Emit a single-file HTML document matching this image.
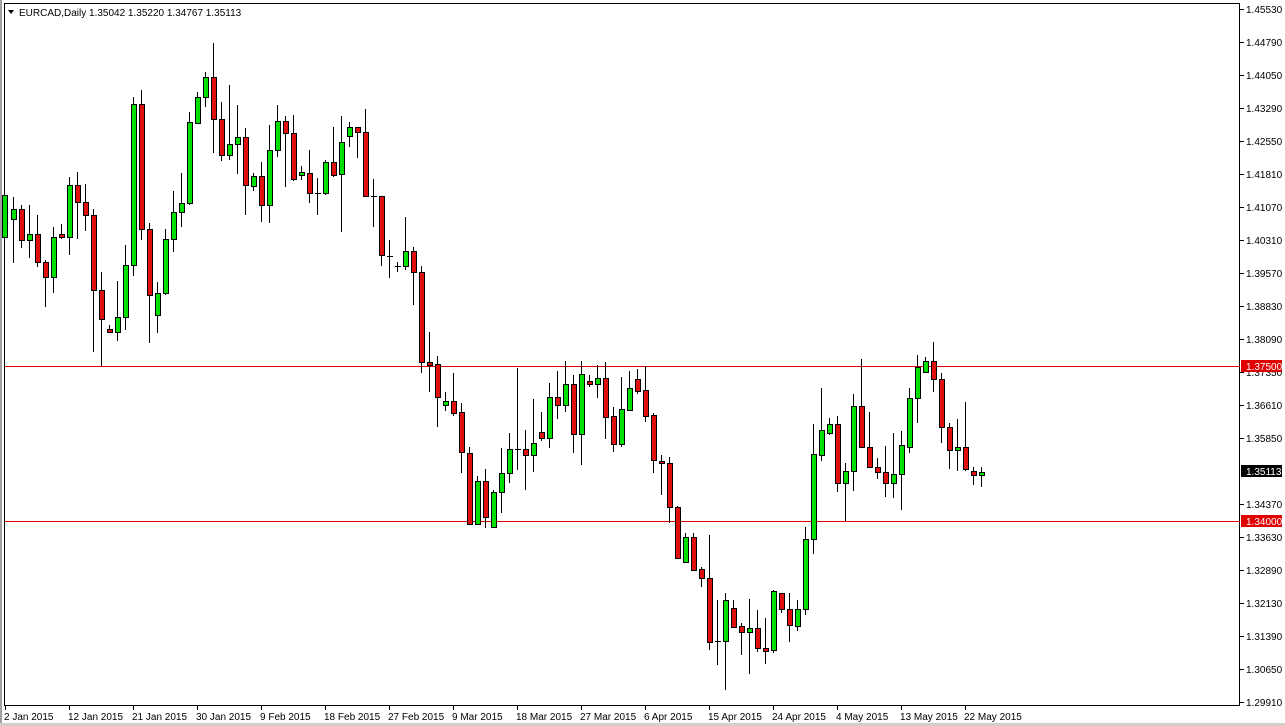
<!DOCTYPE html>
<html><head><meta charset="utf-8"><style>
html,body{margin:0;padding:0;background:#fff;width:1285px;height:726px;overflow:hidden}
svg text{font-family:"Liberation Sans",sans-serif;font-size:10px;fill:#000}
</style></head><body>
<svg id="s" width="1285" height="726" xmlns="http://www.w3.org/2000/svg">
<rect x="0" y="0" width="1285" height="726" fill="#fff"/>
<rect x="0" y="0" width="2" height="726" fill="#a0a0a0"/>
<rect x="0" y="723" width="1285" height="3" fill="#d4d0c8"/>
<rect x="4.5" y="3.5" width="1235" height="702" fill="none" stroke="#000" stroke-width="1"/>
<line x1="5" y1="366.5" x2="1240" y2="366.5" stroke="#e00000"/>
<line x1="5" y1="521.5" x2="1240" y2="521.5" stroke="#e00000"/>
<polygon points="8,10 14,10 11,14" fill="#000"/>
<text x="19" y="16">EURCAD,Daily  1.35042 1.35220 1.34767 1.35113</text>
<g id="c"></g>
<g id="ax"></g>
</svg>
<script>
var d=[[4,237,195,193,247],[13,219,209,197,263],[21,209,240,205,248],[29,240,234,205,258],[37,234,262,215,267],[45,262,277,260,307],[53,277,237,227,293],[61,234,237,224,239],[69,237,185,177,255],[77,185,202,172,239],[85,202,215,184,231],[93,215,290,209,352],[101,290,319,272,366],[109,329,332,325,333],[117,332,317,281,341],[125,317,265,245,330],[133,265,104,97,276],[141,104,229,90,240],[149,229,295,223,343],[157,315,293,282,333],[165,293,239,229,295],[173,239,212,191,252],[181,212,203,173,227],[189,203,122,112,205],[197,123,97,92,124],[205,97,77,72,107],[213,77,119,43,153],[221,119,155,102,161],[229,155,144,85,160],[237,144,137,105,174],[245,137,185,128,215],[253,186,176,173,191],[261,176,205,162,222],[269,205,150,125,223],[277,150,121,105,157],[285,121,133,116,187],[293,133,179,115,181],[301,175,172,166,180],[309,173,193,150,203],[317,193,193,178,215],[325,193,162,160,195],[333,162,175,127,177],[341,174,142,116,232],[349,136,127,122,147],[357,127,132,127,158],[365,132,196,109,197],[373,196,196,179,227],[381,196,255,196,266],[389,256,256,240,278],[397,266,266,262,272],[405,266,251,217,270],[413,251,272,247,305],[421,272,362,266,373],[429,362,365,332,392],[437,364,397,356,427],[445,405,401,392,411],[453,401,413,373,416],[461,412,452,403,473],[469,453,524,447,524],[477,524,481,476,525],[485,481,517,469,528],[493,527,492,490,528],[501,492,473,448,513],[509,473,449,433,483],[517,449,449,368,470],[525,449,455,430,490],[533,455,443,399,472],[541,432,438,412,441],[549,438,397,383,448],[557,397,405,371,419],[565,405,384,361,412],[573,384,434,375,453],[581,434,374,361,465],[589,381,384,375,387],[597,384,378,365,398],[605,378,417,362,439],[613,416,444,407,452],[621,444,409,377,447],[629,410,388,371,411],[637,379,391,369,394],[645,390,416,366,422],[653,415,460,413,473],[661,461,463,455,495],[669,463,507,457,523],[677,507,558,506,558],[685,562,537,533,563],[693,537,570,533,571],[701,569,578,567,587],[709,578,642,535,650],[717,641,641,600,665],[725,641,600,593,690],[733,608,627,600,628],[741,626,632,623,655],[749,632,628,599,674],[757,628,648,610,652],[765,648,651,618,664],[773,650,591,590,653],[781,593,609,593,613],[789,609,625,593,642],[797,626,609,600,631],[805,609,539,527,615],[813,539,454,424,554],[821,455,430,388,461],[829,433,424,418,435],[837,424,483,416,492],[845,483,471,463,521],[853,471,406,394,491],[861,406,447,359,448],[869,447,467,412,467],[877,467,472,458,479],[885,472,483,446,497],[893,483,474,433,498],[901,474,445,431,510],[909,447,398,388,453],[917,398,367,355,423],[925,372,361,357,373],[933,361,379,342,392],[941,379,427,373,443],[949,427,450,423,469],[957,450,447,419,471],[965,447,469,402,471],[973,471,475,467,485],[981,475,472,467,487]];
var h='';
d.forEach(function(c){var x=c[0],o=c[1],cl=c[2],hi=c[3],lo=c[4];
h+='<line x1="'+(x+0.5)+'" y1="'+hi+'" x2="'+(x+0.5)+'" y2="'+lo+'" stroke="#000"/>';
var t=Math.min(o,cl),b=Math.max(o,cl);
if(b-t<1){h+='<line x1="'+(x-2)+'" y1="'+(t+0.5)+'" x2="'+(x+4)+'" y2="'+(t+0.5)+'" stroke="#000"/>';}
else{var col=cl<o?'#00e000':'#e01010';h+='<rect x="'+(x-1.5)+'" y="'+(t+0.5)+'" width="5" height="'+(b-t)+'" fill="'+col+'" stroke="#000"/>';}
});
document.getElementById('c').innerHTML=h;
var a='';
var p=['1.45530','1.44790','1.44050','1.43290','1.42550','1.41810','1.41070','1.40310','1.39570','1.38830','1.38090','1.37350','1.36610','1.35850','','1.34370','1.33630','1.32890','1.32130','1.31390','1.30650','1.29910'];
p.forEach(function(v,i){var y=9+33*i;if(v){a+='<line x1="1240" y1="'+(y+0.5)+'" x2="1244" y2="'+(y+0.5)+'" stroke="#000"/><text x="1246" y="'+(y+4)+'">'+v+'</text>';}});
a+='<rect x="1241" y="360" width="41" height="12" fill="#e00000"/><text x="1246" y="370" style="fill:#fff">1.37500</text>';
a+='<rect x="1241" y="465" width="41" height="12" fill="#000"/><text x="1246" y="475" style="fill:#fff">1.35113</text>';
a+='<rect x="1241" y="515" width="41" height="12" fill="#e00000"/><text x="1246" y="525" style="fill:#fff">1.34000</text>';
var ds=['2 Jan 2015','12 Jan 2015','21 Jan 2015','30 Jan 2015','9 Feb 2015','18 Feb 2015','27 Feb 2015','9 Mar 2015','18 Mar 2015','27 Mar 2015','6 Apr 2015','15 Apr 2015','24 Apr 2015','4 May 2015','13 May 2015','22 May 2015'];
ds.forEach(function(v,i){var x=5+64*i;a+='<line x1="'+(x+0.5)+'" y1="706" x2="'+(x+0.5)+'" y2="710" stroke="#000"/><text x="'+(x-1)+'" y="720">'+v+'</text>';});
document.getElementById('ax').innerHTML=a;
</script>
</body></html>
